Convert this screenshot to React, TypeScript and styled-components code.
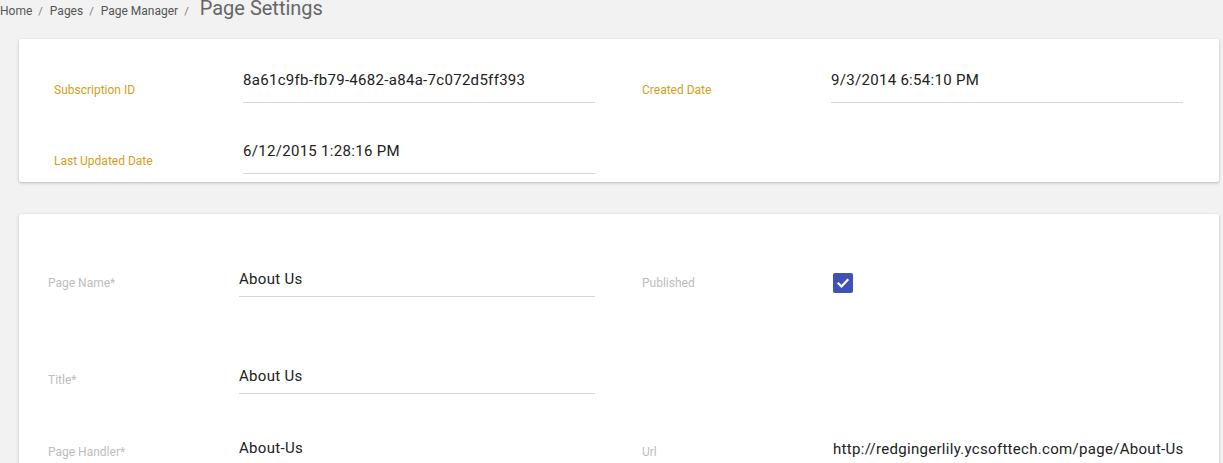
import React from 'react';
import styled, { createGlobalStyle } from 'styled-components';

const GlobalStyle = createGlobalStyle`
  html, body {
    margin: 0;
    padding: 0;
    background: #f2f2f2;
    font-family: Roboto, 'Liberation Sans', Arial, sans-serif;
  }
`;

const Page = styled.div`
  padding: 0 4px 40px 0;
`;

const Breadcrumb = styled.div`
  display: flex;
  align-items: baseline;
  height: 16px;
  margin-bottom: 23px;
`;

const Crumb = styled.span`
  font-size: 12px;
  line-height: 16px;
  color: #555;
`;

const Separator = styled.span`
  font-size: 11px;
  line-height: 16px;
  color: #777;
  padding: 0 7px 0 6px;
`;

const Title = styled.span`
  font-size: 20px;
  line-height: 17px;
  color: #666;
  margin-left: 4px;
`;

const Card = styled.section<{ $padTop: number; $padLeft: number; $padBottom: number }>`
  margin-left: 19px;
  background: #fff;
  border-radius: 2px;
  box-shadow: 0 1px 3px rgba(0, 0, 0, 0.25);
  padding: ${(p) => p.$padTop}px 0 ${(p) => p.$padBottom}px ${(p) => p.$padLeft}px;
  & + & {
    margin-top: 32px;
  }
`;

const Row = styled.div<{ $cols: string; $gap?: number }>`
  display: grid;
  grid-template-columns: ${(p) => p.$cols};
  align-items: end;
  margin-top: ${(p) => p.$gap ?? 0}px;
`;

const Label = styled.div<{ $tone: 'gold' | 'muted'; $lift?: number }>`
  font-size: 12px;
  line-height: 14px;
  color: ${(p) => (p.$tone === 'gold' ? '#d39e1b' : '#bdbdbd')};
  padding-bottom: ${(p) => p.$lift ?? 7}px;
`;

const Input = styled.div<{ $padBottom: number }>`
  font-size: 15px;
  line-height: 20px;
  letter-spacing: 0.3px;
  color: #212121;
  padding-bottom: ${(p) => p.$padBottom}px;
  border-bottom: 1px solid #d6d6d6;
  white-space: nowrap;
`;

const PlainValue = styled.div`
  font-size: 15px;
  line-height: 20px;
  letter-spacing: 0.3px;
  color: #212121;
  padding-bottom: 7px;
  white-space: nowrap;
`;

const CheckBox = styled.span`
  display: inline-flex;
  align-items: center;
  justify-content: center;
  width: 20px;
  height: 20px;
  border-radius: 2px;
  background: #3f51b5;
  margin-bottom: 4px;
`;

const Spacer = styled.div``;

const infoCols = '189px 352px 47px 189px 352px';
const formCols = '191px 356px 47px 191px 352px';

export default function App() {
  return (
    <Page>
      <GlobalStyle />
      <Breadcrumb>
        <Crumb>Home</Crumb>
        <Separator>/</Separator>
        <Crumb>Pages</Crumb>
        <Separator>/</Separator>
        <Crumb>Page Manager</Crumb>
        <Separator>/</Separator>
        <Title>Page Settings</Title>
      </Breadcrumb>

      <Card $padTop={31} $padLeft={35} $padBottom={8}>
        <Row $cols={infoCols}>
          <Label $tone="gold" $lift={6}>Subscription ID</Label>
          <Input $padBottom={12}>8a61c9fb-fb79-4682-a84a-7c072d5ff393</Input>
          <Spacer />
          <Label $tone="gold" $lift={6}>Created Date</Label>
          <Input $padBottom={12}>9/3/2014 6:54:10 PM</Input>
        </Row>
        <Row $cols={infoCols} $gap={38}>
          <Label $tone="gold" $lift={6}>Last Updated Date</Label>
          <Input $padBottom={12}>6/12/2015 1:28:16 PM</Input>
        </Row>
      </Card>

      <Card $padTop={55} $padLeft={29} $padBottom={40}>
        <Row $cols={formCols}>
          <Label $tone="muted">Page Name*</Label>
          <Input $padBottom={7}>About Us</Input>
          <Spacer />
          <Label $tone="muted">Published</Label>
          <div>
            <CheckBox>
              <svg width="14" height="14" viewBox="0 0 14 14">
                <polyline
                  points="2.5,7.5 5.5,10.5 11.5,4"
                  fill="none"
                  stroke="#fff"
                  strokeWidth="2.2"
                  strokeLinecap="square"
                />
              </svg>
            </CheckBox>
          </div>
        </Row>
        <Row $cols={formCols} $gap={69}>
          <Label $tone="muted">Title*</Label>
          <Input $padBottom={7}>About Us</Input>
        </Row>
        <Row $cols={formCols} $gap={44}>
          <Label $tone="muted">Page Handler*</Label>
          <Input $padBottom={7}>About-Us</Input>
          <Spacer />
          <Label $tone="muted">Url</Label>
          <PlainValue>http://redgingerlily.ycsofttech.com/page/About-Us</PlainValue>
        </Row>
      </Card>
    </Page>
  );
}
